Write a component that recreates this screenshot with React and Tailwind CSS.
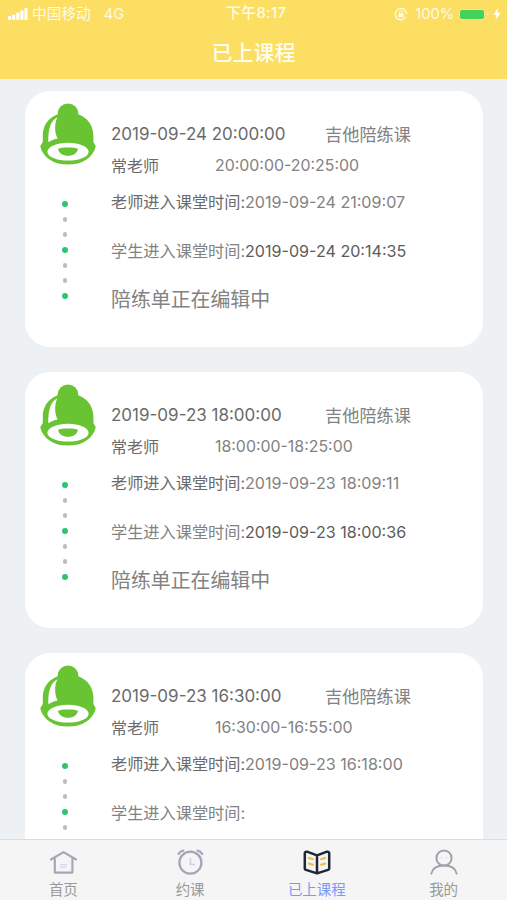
const lessons = [
  {
    start: '2019-09-24 20:00:00',
    course: '吉他陪练课',
    teacher: '常老师',
    range: '20:00:00-20:25:00',
    teacherIn: '2019-09-24 21:09:07',
    studentIn: '2019-09-24 20:14:35',
    note: '陪练单正在编辑中',
  },
  {
    start: '2019-09-23 18:00:00',
    course: '吉他陪练课',
    teacher: '常老师',
    range: '18:00:00-18:25:00',
    teacherIn: '2019-09-23 18:09:11',
    studentIn: '2019-09-23 18:00:36',
    note: '陪练单正在编辑中',
  },
  {
    start: '2019-09-23 16:30:00',
    course: '吉他陪练课',
    teacher: '常老师',
    range: '16:30:00-16:55:00',
    teacherIn: '2019-09-23 16:18:00',
    studentIn: '',
    note: '',
  },
];

function HatLogo() {
  return (
    <svg viewBox="0 0 56 62" className="w-14 h-[62px] shrink-0">
      <g fill="#69c433">
        <circle cx="28" cy="10.8" r="10.4" />
        <path d="M2.8 39V32C3.4 18 14 9.5 28 9.5S52.8 18 53.4 32v7l2.4 4.2C53 55 42 61.6 28 61.6S3 55 0.2 43.2z" />
      </g>
      <g fill="#fff">
        <path d="M17.4 14.2C11 17.4 8 25 8.3 39.2c2.8-1.8 5.8-3 9.3-3.7C14.6 29.5 14.2 21 17.4 14.2z" />
        <ellipse cx="28" cy="48.7" rx="20.6" ry="8.9" />
      </g>
      <path d="M18 45.9c3-1.8 17-1.8 20 0-.8 4-4.8 6.8-10 6.8s-9.2-2.8-10-6.8z" fill="#69c433" />
    </svg>
  );
}

function Timeline() {
  return (
    <div className="flex flex-col items-center justify-between w-2 h-[98px] ml-[21px] mt-9">
      {[0, 1, 2, 3, 4, 5, 6].map((i) => (
        <span
          key={i}
          className={
            i % 3 === 0
              ? 'size-1.5 rounded-full bg-[#30c46c]'
              : 'size-[4.4px] rounded-full bg-[#bcbcbc]'
          }
        />
      ))}
    </div>
  );
}

function LessonCard({ lesson }) {
  return (
    <div className="flex h-64 shrink-0 rounded-[25px] bg-white pl-[15px] pt-3">
      <div className="w-[71px] shrink-0">
        <HatLogo />
        <Timeline />
      </div>
      <div className="flex flex-col whitespace-nowrap text-[#828282]">
        <div className="flex h-6 mt-5 items-center">
          <span className="w-[214px] text-[17px] text-[#6a6a6a]">{lesson.start}</span>
          <span className="text-[17.2px]">{lesson.course}</span>
        </div>
        <div className="flex h-6 mt-[7px] items-center">
          <span className="w-[104px] text-base text-[#6a6a6a]">{lesson.teacher}</span>
          <span className="text-[15.9px]">{lesson.range}</span>
        </div>
        <div className="flex h-6 mt-[12px] items-center text-[16.1px]">
          <span className="w-[134px] text-[16.2px] text-[#6a6a6a]">老师进入课堂时间:</span>
          <span>{lesson.teacherIn}</span>
        </div>
        <div className="flex h-6 mt-[25px] items-center text-[16.1px]">
          <span className="w-[134px] text-[16.2px]">学生进入课堂时间:</span>
          <span className="text-[#5c5c5c]">{lesson.studentIn}</span>
        </div>
        <div className="flex h-6 mt-[26px] items-center text-[19.9px]">{lesson.note}</div>
      </div>
    </div>
  );
}

function StatusBar() {
  return (
    <div className="flex h-7 items-center pl-2 pr-1.5 text-sm text-[#fffbe6]">
      <div className="flex w-[218px] items-center">
        <svg viewBox="0 0 20 12" className="w-5 h-3" fill="#fff">
          <rect x="0" y="8" width="3.2" height="4" rx="1" />
          <rect x="4.1" y="6.5" width="3.2" height="5.5" rx="1" />
          <rect x="8.2" y="4.5" width="3.2" height="7.5" rx="1" />
          <rect x="12.3" y="2.3" width="3.2" height="9.7" rx="1" />
          <rect x="16.4" y="0" width="3.2" height="12" rx="1" />
        </svg>
        <span className="ml-1 text-[14.7px]">中国移动</span>
        <span className="ml-[13px] text-[14.7px]">4G</span>
      </div>
      <span className="text-[14.8px] font-medium tracking-[0.4px]">下午8:17</span>
      <div className="ml-auto flex items-center">
        <svg viewBox="0 0 14 14" className="size-3.5" fill="none" stroke="#fffbe6" strokeWidth="1.3">
          <path d="M12.3 5.2A5.7 5.7 0 1 0 12 9.8" />
          <path d="M10.6 6l2 1.4L14 5.3" fill="#fffbe6" stroke="none" />
          <rect x="4.4" y="6.3" width="5.2" height="3.9" rx=".5" fill="#fffbe6" stroke="none" />
          <path d="M5.5 6.5V5.2a1.5 1.5 0 0 1 3 0v1.3" strokeWidth="1" />
        </svg>
        <span className="ml-[7px] text-[14.6px]">100%</span>
        <div className="ml-[5px] h-[11px] w-[26px] rounded-[3px] border border-[#fbe48a] bg-[#43d35d]" />
        <div className="ml-0.5 h-1 w-0.5 rounded-r bg-[#fdeeb0]" />
        <svg viewBox="0 0 8 12" className="ml-[4px] w-2 h-3" fill="#fff">
          <path d="M5.2 0L.3 6.9h3L2.5 12l5.2-7.3H4.6z" />
        </svg>
      </div>
    </div>
  );
}

function HomeIcon() {
  return (
    <svg viewBox="0 0 28 26" className="w-7 h-[26px]" fill="none" stroke="#a5a5b9" strokeWidth="2.1" strokeLinecap="round" strokeLinejoin="round">
      <path d="M2 10.5L14.5 3.2 27 10.5" />
      <path d="M5.8 10v13.6h17.6V10" />
      <path d="M11.5 15.8h6M12 18.2h5" stroke="#dadaf0" strokeWidth="1.6" />
    </svg>
  );
}

function ClockIcon() {
  return (
    <svg viewBox="0 0 28 26" className="w-7 h-[26px]" fill="none" stroke="#a5a5b9" strokeWidth="2.3" strokeLinecap="round">
      <circle cx="14.4" cy="13.7" r="11" />
      <path d="M2.6 4.8Q4.4 2.2 7.2 1.7M26.2 4.8Q24.4 2.2 21.6 1.7" />
      <path d="M14.4 9.5v6h4" stroke="#cfcfe6" strokeWidth="1.7" />
    </svg>
  );
}

function BookIcon() {
  return (
    <svg viewBox="0 0 28 26" className="w-7 h-[26px]" fill="none" strokeLinecap="round" strokeLinejoin="round">
      <path d="M14 6.4L4 2.7Q1.8 2.4 1.8 4.2V19.4Q1.8 20.5 3 20.9L14 24.4l11-3.5q1.2-.4 1.2-1.5V4.2Q26.2 2.4 24 2.7L14 6.4V24.2" stroke="#1f2936" strokeWidth="2.5" />
      <path d="M6 9l3.9 1.2M6 14.6l3.9 1.2M18.1 10.2L22 9M18.1 15.8l3.9-1.2" stroke="#f3bd3d" strokeWidth="2.2" />
    </svg>
  );
}

function UserIcon() {
  return (
    <svg viewBox="0 0 28 26" className="w-7 h-[26px]" fill="none" stroke="#a0a0ad" strokeWidth="2" strokeLinecap="round">
      <circle cx="14" cy="9" r="7.6" />
      <path d="M1.4 24.6C2.5 19.5 7 16.6 14 16.6s11.5 2.9 12.6 8" />
      <path d="M11.5 8.5v.2M16.5 8.5v.2" stroke="#dcdcea" strokeWidth="1.6" />
    </svg>
  );
}

const tabs = [
  { label: '首页', icon: HomeIcon },
  { label: '约课', icon: ClockIcon },
  { label: '已上课程', icon: BookIcon, active: true },
  { label: '我的', icon: UserIcon },
];

export default function App() {
  return (
    <div className="flex h-[900px] w-[507px] flex-col overflow-hidden bg-[#edf1f3] font-['Inter','Noto_Sans_CJK_SC',sans-serif]">
      <header className="h-[79px] shrink-0 bg-[#fbde62]">
        <StatusBar />
        <h1 className="flex h-[49px] items-center justify-center text-[21px] font-medium text-[#fffdf0]">已上课程</h1>
      </header>
      <main className="flex min-h-0 flex-1 flex-col gap-[25px] overflow-hidden pl-[25px] pr-6 pt-3">
        {lessons.map((lesson) => (
          <LessonCard key={lesson.start} lesson={lesson} />
        ))}
      </main>
      <nav className="grid h-[61px] shrink-0 grid-cols-4 border-t border-[#dadcde] bg-[#f5f5f5]">
        {tabs.map(({ label, icon: Icon, active }) => (
          <div key={label} className="flex flex-col items-center pt-[9px]">
            <Icon />
            <span className={active ? 'mt-[5px] text-[14.5px] leading-5 text-[#7f97f5]' : 'mt-[5px] text-[14.5px] leading-5 text-[#999]'}>
              {label}
            </span>
          </div>
        ))}
      </nav>
    </div>
  );
}
